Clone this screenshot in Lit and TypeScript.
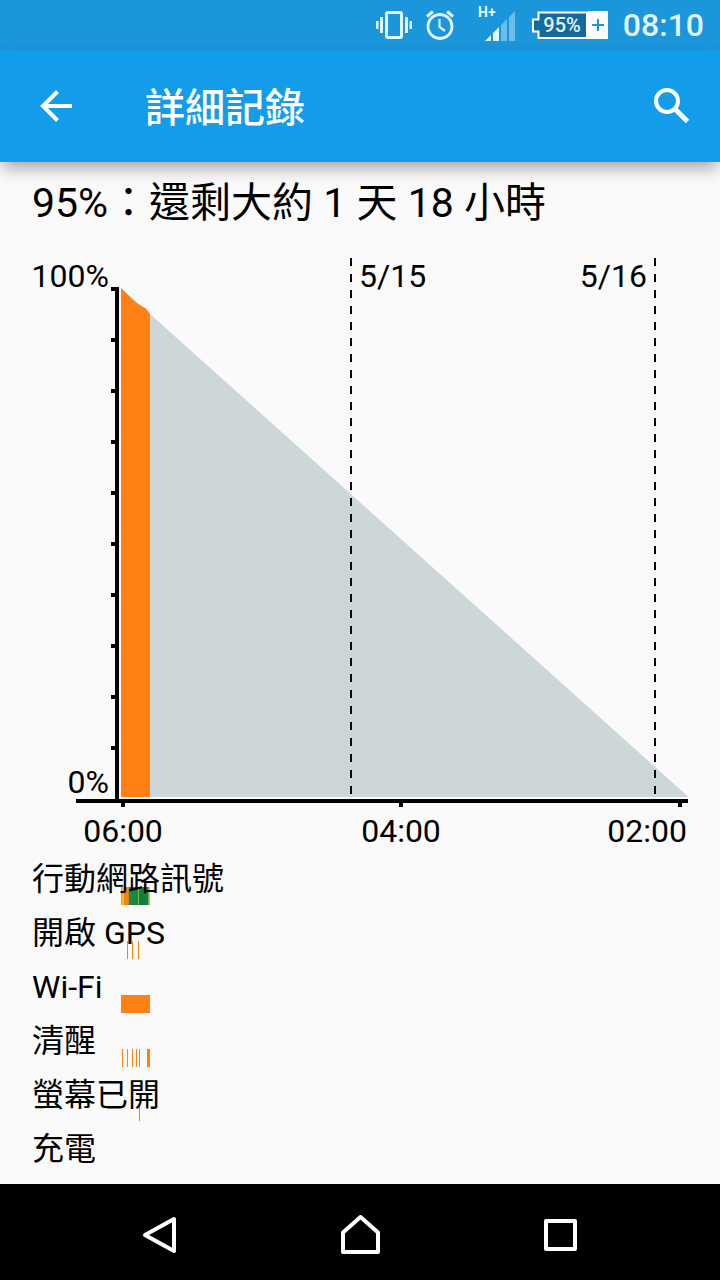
import { LitElement, html, css, svg } from "lit";
import { customElement } from "lit/decorators.js";

type Segment = { x: number; w: number; color?: string };
type Row = { label: string; segments: Segment[] };

const ORANGE = "#ff8013";

const ROWS: Row[] = [
  {
    label: "行動網路訊號",
    segments: [
      { x: 89, w: 1, color: "#e8a020" },
      { x: 90, w: 2, color: "#f0c020" },
      { x: 92, w: 4, color: "#ff8013" },
      { x: 96, w: 1, color: "#b09020" },
      { x: 97, w: 2, color: "#4a7a30" },
      { x: 99, w: 7, color: "#0f8a48" },
      { x: 106, w: 1, color: "#8ab840" },
      { x: 107, w: 9, color: "#0a8043" },
      { x: 116, w: 1, color: "#7ab040" },
      { x: 117, w: 1, color: "#e8c020" },
    ],
  },
  {
    label: "開啟 GPS",
    segments: [
      { x: 95, w: 1 },
      { x: 100, w: 1 },
      { x: 106, w: 1 },
    ],
  },
  { label: "Wi-Fi", segments: [{ x: 89, w: 29 }] },
  {
    label: "清醒",
    segments: [
      { x: 90, w: 1 },
      { x: 95, w: 1 },
      { x: 100, w: 1 },
      { x: 104, w: 1 },
      { x: 107, w: 1 },
      { x: 115, w: 3 },
    ],
  },
  { label: "螢幕已開", segments: [{ x: 107, w: 1 }] },
  { label: "充電", segments: [] },
];

@customElement("status-bar")
class StatusBar extends LitElement {
  static styles = css`
    :host {
      display: flex;
      align-items: center;
      justify-content: flex-end;
      height: 50px;
      padding: 0 16px;
      background: #1b96db;
      color: #e1f5fe;
      font-family: Roboto, "Noto Sans", sans-serif;
    }
    .icons {
      display: block;
      margin-right: 15px;
    }
    .small {
      font-size: 14px;
      font-weight: 700;
    }
    .level {
      font-size: 20px;
      font-weight: 500;
    }
    .clock {
      font-size: 32px;
      font-weight: 500;
      line-height: 52px;
    }
  `;
  render() {
    return html`
      <svg class="icons" width="234" height="50" viewBox="375 0 234 50" fill="#e1f5fe" role="img" aria-label="狀態">
        <rect x="387.5" y="12.5" width="15" height="25" rx="1.5" fill="none" stroke="#e1f5fe" stroke-width="3" />
        <path d="M381 17h3v16h-3zM377 21h2.500v8h-2.500zM406 17h3v16h-3zM410.500 21h2.500v8h-2.500z" />
        <circle cx="441" cy="26.500" r="12" fill="none" stroke="#e1f5fe" stroke-width="2.800" />
        <path d="M440.500 19v8l5.500 4" fill="none" stroke="#e1f5fe" stroke-width="2.200" />
        <path d="M428 16.500l6-5M454 16.500l-6-5" stroke="#e1f5fe" stroke-width="3" />
        <text class="small" x="479" y="17">H+</text>
        <path d="M486 41l6-6v6zM494 33l6-6v14h-6z" />
        <path d="M502 25l6-6v22h-6zM510 17l6-6v30h-6z" opacity=".4" />
        <path d="M539.500 12.500H588v25.500H539.500v-6.500H534v-12h5.500z" fill="#146a9b" stroke="#fff" stroke-width="2" />
        <rect x="589" y="11" width="20" height="28" fill="#fff" />
        <path d="M593 25h12M599 19v12" stroke="#1b96db" stroke-width="2" />
        <text class="level" x="563" y="32" text-anchor="middle">95%</text>
      </svg>
      <span class="clock">08:10</span>
    `;
  }
}

@customElement("battery-chart")
class BatteryChart extends LitElement {
  static styles = css`
    :host {
      display: block;
    }
    .chart {
      display: block;
      width: 100%;
      font: 32px Roboto, "Noto Sans", sans-serif;
      fill: #000;
    }
  `;
  render() {
    const ticks = Array.from({ length: 10 }, (_, i) => 37 + i * 51);
    return html`
      <svg class="chart" viewBox="0 0 656 600" role="img" aria-label="電池電量">
        <path d="M89 547V38L118 64L656 546.500V547z" fill="#cdd6d9" />
        <path d="M89 547V38L100 49L106 54L114 58.500L118 64V547z" fill=${ORANGE} />
        <path d="M319 8V547M623 8V547" stroke="#000" stroke-width="2" stroke-dasharray="8 8" />
        <rect x="83" y="37" width="4" height="514" />
        ${ticks.map((y) => svg`<rect x="79" y=${y} width="4" height="4" />`)}
        <rect x="44" y="549" width="612" height="4" />
        ${[89, 367, 646].map((x) => svg`<rect x=${x} y="553" width="4" height="4" />`)}
        <text x="77" y="37" text-anchor="end">100%</text>
        <text x="77" y="543" text-anchor="end">0%</text>
        <text x="327" y="37">5/15</text>
        <text x="615" y="37" text-anchor="end">5/16</text>
        <text x="91" y="592" text-anchor="middle">06:00</text>
        <text x="369" y="592" text-anchor="middle">04:00</text>
        <text x="655" y="592" text-anchor="end">02:00</text>
      </svg>
    `;
  }
}

@customElement("app-root")
class AppRoot extends LitElement {
  static styles = css`
    :host {
      display: flex;
      flex-direction: column;
      min-height: 100vh;
      background: #fafafa;
      color: #000;
      font-family: Roboto, "Noto Sans CJK TC", sans-serif;
    }
    .bar {
      display: flex;
      align-items: center;
      height: 112px;
      padding: 0 24px;
      box-sizing: border-box;
      background: #139ce9;
      color: #fff;
      box-shadow: 0 8px 16px -2px rgba(0, 0, 0, 0.35);
    }
    .title {
      flex: 1;
      margin: 0 0 0 57px;
      padding-top: 6px;
      font-size: 40px;
      line-height: 48px;
      font-weight: 500;
    }
    .btn {
      display: flex;
      align-items: center;
      justify-content: center;
      width: 64px;
      height: 64px;
      padding: 0;
      border: 0;
      background: none;
      color: inherit;
    }
    .search {
      margin-right: -8px;
    }
    .content {
      flex: 1;
      padding: 16px 32px 8px;
    }
    .summary {
      margin: 0;
      padding-bottom: 22px;
      font-size: 41px;
      line-height: 50px;
      font-weight: 400;
    }
    .rows {
      margin: 0;
      padding: 0;
      list-style: none;
    }
    .row {
      display: grid;
      grid-template-rows: 55px;
      height: 54px;
    }
    .label,
    .track {
      grid-area: 1 / 1;
    }
    .label {
      z-index: 1;
      font-size: 32px;
      line-height: 58px;
    }
    .track {
      align-self: end;
      width: 100%;
    }
    .nav {
      display: flex;
      justify-content: center;
      gap: 136px;
      height: 96px;
      padding-top: 6px;
      box-sizing: border-box;
      align-items: center;
      background: #000;
      color: #fff;
    }
  `;
  render() {
    return html`
      <status-bar></status-bar>
      <header class="bar">
        <button class="btn" aria-label="返回">
          <svg width="32" height="32" viewBox="0 0 32 32" fill="none" stroke="currentColor" stroke-width="4">
            <path d="M32 16H3M17.500 1.500L3 16l14.500 14.500" />
          </svg>
        </button>
        <h1 class="title">詳細記錄</h1>
        <button class="btn search" aria-label="搜尋">
          <svg width="36" height="36" viewBox="0 0 36 36" fill="none" stroke="currentColor">
            <circle cx="13" cy="13" r="11" stroke-width="4" />
            <path d="M21.500 21.500L33.500 33.500" stroke-width="5" />
          </svg>
        </button>
      </header>
      <main class="content">
        <h2 class="summary">95%：還剩大約 1 天 18 小時</h2>
        <battery-chart></battery-chart>
        <ul class="rows">
          ${ROWS.map(
            (row) => html`
              <li class="row">
                <span class="label">${row.label}</span>
                <svg class="track" viewBox="0 0 656 18" shape-rendering="crispEdges" aria-hidden="true">
                  ${row.segments.map(
                    (s) => svg`<rect x=${s.x} y="0" width=${s.w} height="18" fill=${s.color ?? ORANGE} />`
                  )}
                </svg>
              </li>
            `
          )}
        </ul>
      </main>
      <nav class="nav">
        <button class="btn" aria-label="返回">
          <svg width="40" height="40" viewBox="0 0 40 40" fill="none" stroke="currentColor" stroke-width="4" stroke-linejoin="round">
            <path d="M34 4L5 20l29 16z" />
          </svg>
        </button>
        <button class="btn" aria-label="主畫面">
          <svg width="40" height="40" viewBox="0 0 40 40" fill="none" stroke="currentColor" stroke-width="4" stroke-linejoin="round">
            <path d="M20.500 2L3 17.500V37h35V17.500z" />
          </svg>
        </button>
        <button class="btn" aria-label="最近使用">
          <svg width="40" height="40" viewBox="0 0 40 40" fill="none" stroke="currentColor" stroke-width="4" stroke-linejoin="round">
            <path d="M6 6h29v28H6z" />
          </svg>
        </button>
      </nav>
    `;
  }
}
